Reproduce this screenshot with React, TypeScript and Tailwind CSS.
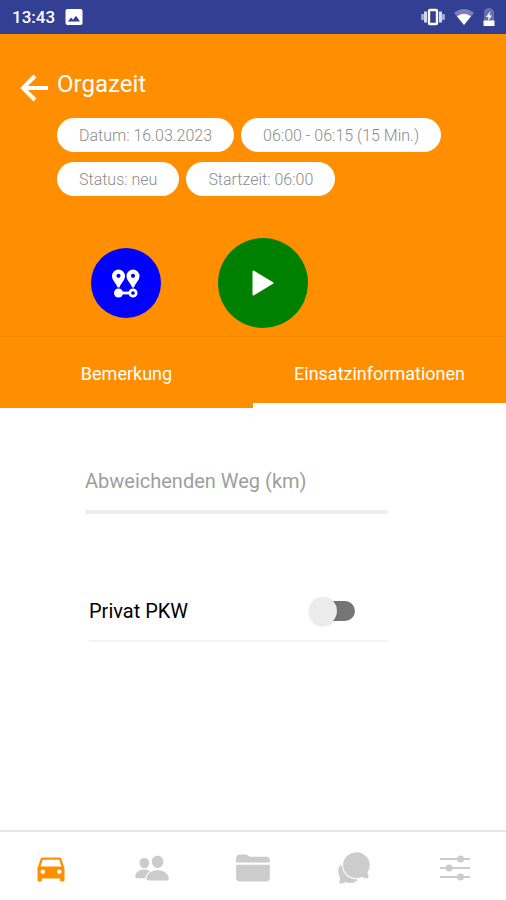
import { useState } from "react";
import type { ReactNode } from "react";
import { IoChatbubbles, IoFolder, IoPeople } from "react-icons/io5";
import { MdDirectionsCar } from "react-icons/md";

function StatusBar() {
  return (
    <div className="flex h-[34px] items-center justify-between bg-[#323f93] pr-[11px] pl-3 text-white">
      <div className="flex items-center gap-[10px]">
        <span className="text-[17px] leading-5 font-medium">13:43</span>
        <svg width="18" height="18" viewBox="0 0 18 18" aria-hidden="true">
          <rect x="0.5" y="1" width="17" height="16" rx="2" fill="white" />
          <path d="M3 13.5 6 9.5l2 2.3 3-4 4 5.7z" fill="#323f93" />
        </svg>
      </div>
      <div className="flex items-center gap-[9px]">
        <svg width="24" height="18" viewBox="0 0 24 18" aria-hidden="true">
          <rect x="8" y="2" width="8" height="14" rx="1" fill="none" stroke="white" strokeWidth="2.4" />
          <path d="M4.500 3.5v11M19.500 3.5v11" stroke="#d5d9ee" strokeWidth="3" />
          <path d="M1.500 6v6M22.500 6v6" stroke="#aab2dc" strokeWidth="2.600" />
        </svg>
        <svg width="20" height="18" viewBox="0 0 20 18" aria-hidden="true">
          <path d="M0 5Q10-3 20 5L10 17z" fill="#7880b8" />
          <path d="M3 8.2Q10 3.2 17 8.2L10 17z" fill="white" />
        </svg>
        <svg width="12" height="20" viewBox="0 0 12 20" aria-hidden="true">
          <path d="M1 19V5a5 4 0 0 1 10 0v14z" fill="#6770af" />
          <path d="M.5 13.5h11V19H.5z" fill="white" />
          <path d="M7.5 4 3 10h2.5L5 14l4-5.500H6.500z" fill="white" />
        </svg>
      </div>
    </div>
  );
}

function Chip({ children }: { children: ReactNode }) {
  return (
    <li className="flex h-[34px] items-center rounded-full bg-white px-[22px] pt-0.5 text-base font-light whitespace-nowrap text-[#8c8c8c]">
      {children}
    </li>
  );
}

function RouteIcon() {
  return (
    <svg width="30" height="30" viewBox="0 0 30 30" fill="white" aria-hidden="true">
      <path
        fillRule="evenodd"
        d="M7.500 1.500A6.500 6.500 0 0 0 1 8c0 2.600 1.300 4.400 2.600 6.200 1.200 1.600 2.400 3.400 3 5.300h1.800c.6-1.900 1.800-3.700 3-5.300C12.700 12.400 14 10.600 14 8a6.500 6.500 0 0 0-6.500-6.500zm0 4.200a2.100 2.100 0 1 1 0 4.200 2.100 2.100 0 0 1 0-4.200z"
      />
      <path
        fillRule="evenodd"
        d="M22 1.500A6.500 6.500 0 0 0 15.500 8c0 2.600 1.300 4.400 2.600 6.200 1.200 1.600 2.400 3.400 3 5.300h1.800c.6-1.900 1.800-3.700 3-5.300 1.300-1.800 2.600-3.600 2.600-6.200A6.500 6.500 0 0 0 22 1.500zm0 4.200a2.100 2.100 0 1 1 0 4.200 2.100 2.100 0 0 1 0-4.200z"
      />
      <circle cx="7.500" cy="25" r="4.500" />
      <path d="M8 25h11" stroke="white" strokeWidth="2.800" />
      <circle cx="22" cy="25" r="3.200" fill="none" stroke="white" strokeWidth="2.700" />
    </svg>
  );
}

function SlidersIcon() {
  return (
    <svg width="36" height="36" viewBox="0 0 36 36" fill="currentColor" aria-hidden="true">
      <path d="M3 9h30M3 18h30M3 27h30" stroke="currentColor" strokeWidth="2.200" />
      <circle cx="23.500" cy="9" r="3.500" />
      <circle cx="12" cy="18" r="3.500" />
      <circle cx="23.500" cy="27" r="3.500" />
    </svg>
  );
}

function Header() {
  return (
    <header className="flex gap-[9px] pt-[34px] pl-5">
      <button type="button" aria-label="Zurück" className="flex h-10 w-7 items-center text-white">
        <svg width="28" height="28" viewBox="0 0 28 28" fill="none" stroke="white" strokeWidth="4" aria-hidden="true">
          <path d="M2.500 14H28M15 2 3 14l12 12" />
        </svg>
      </button>
      <div className="min-w-0 flex-1 pr-5">
        <h1 className="text-2xl text-white">Orgazeit</h1>
        <ul className="mt-[18px] flex flex-wrap gap-x-[7px] gap-y-[10px]">
          <Chip>Datum: 16.03.2023</Chip>
          <Chip>06:00 - 06:15 (15 Min.)</Chip>
          <Chip>Status: neu</Chip>
          <Chip>Startzeit: 06:00</Chip>
        </ul>
      </div>
    </header>
  );
}

const tabs = ["Bemerkung", "Einsatzinformationen"];

const navItems = [
  { label: "Fahrten", icon: <MdDirectionsCar size={36} />, active: true },
  { label: "Personen", icon: <IoPeople size={36} />, active: false },
  { label: "Dokumente", icon: <IoFolder size={36} />, active: false },
  { label: "Nachrichten", icon: <IoChatbubbles size={36} />, active: false },
  { label: "Optionen", icon: <SlidersIcon />, active: false },
];

export default function App() {
  const [tab, setTab] = useState(1);

  return (
    <div className="flex min-h-screen flex-col bg-white font-[Roboto,sans-serif]">
      <StatusBar />
      <div className="bg-[#ff8f00]">
        <Header />
        <div className="mt-[42px] flex items-center gap-[57px] pb-2 pl-[91px]">
          <button type="button" aria-label="Route" className="flex size-[70px] items-center justify-center rounded-full bg-[#0000ff]">
            <RouteIcon />
          </button>
          <button type="button" aria-label="Starten" className="flex size-[90px] items-center justify-center rounded-full bg-[#008000]">
            <svg width="24" height="28" viewBox="0 0 24 28" aria-hidden="true">
              <path d="M2.500 2.500 21.500 14l-19 11.500z" fill="white" stroke="white" strokeWidth="2" strokeLinejoin="round" />
            </svg>
          </button>
        </div>
        <div role="tablist" className="flex h-[72px] border-t border-[#f38900]">
          {tabs.map((label, index) => (
            <button
              key={label}
              type="button"
              role="tab"
              aria-selected={tab === index}
              onClick={() => setTab(index)}
              className={`flex-1 basis-0 border-b-[5px] pt-2 text-lg text-white ${tab === index ? "border-white" : "border-transparent"}`}
            >
              {label}
            </button>
          ))}
        </div>
      </div>

      <main className="flex-1 pl-[85px]">
        <form className="w-[72%]">
          <input
            type="text"
            inputMode="decimal"
            aria-label="Abweichenden Weg (km)"
            placeholder="Abweichenden Weg (km)"
            className="mt-[42px] h-16 w-full border-b-4 border-[#eeeeee] pt-0.5 text-xl outline-none placeholder:text-[#9e9e9e]"
          />
          <div className="mt-[68px] ml-1 flex h-[60px] items-center justify-between border-b-2 border-[#f4f4f4] pr-[33px]">
            <label htmlFor="private-car" className="text-xl text-black">
              Privat PKW
            </label>
            <input
              id="private-car"
              type="checkbox"
              role="switch"
              className="flex h-5 w-[44px] appearance-none items-center rounded-full bg-[#757575] before:-ml-0.5 before:size-7 before:shrink-0 before:rounded-full before:bg-[#ececec] before:shadow-sm checked:bg-[#ffb74d] checked:before:ml-5"
            />
          </div>
        </form>
      </main>

      <nav className="grid h-[70px] grid-cols-5 border-t-2 border-[#e6e6e6] pt-1">
        {navItems.map(({ label, icon, active }) => (
          <a
            key={label}
            href="#"
            aria-label={label}
            className={`flex items-center justify-center ${active ? "text-[#ff8f00]" : "text-[#cccccc]"}`}
          >
            {icon}
          </a>
        ))}
      </nav>
    </div>
  );
}
